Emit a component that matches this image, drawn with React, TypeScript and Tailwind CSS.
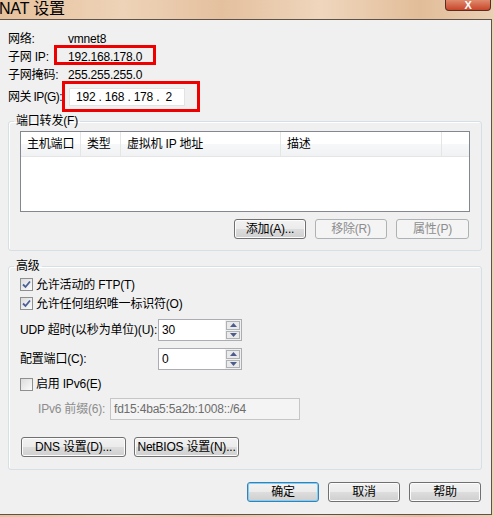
import React from 'react';

const font = { fontFamily: '"Liberation Sans", "Noto Sans CJK SC", sans-serif' };

const Btn: React.FC<{ label: string; w: string; disabled?: boolean; primary?: boolean }> = ({ label, w, disabled, primary }) => {
  const base = 'h-[20px] rounded-[3px] border flex items-center justify-center text-[12px] leading-none shrink-0 whitespace-nowrap';
  const tone = disabled
    ? 'border-[#adb2b5] bg-[#f4f4f4] text-[#8d8d8d]'
    : primary
    ? 'border-[#3c7fb1] bg-[linear-gradient(#f2f2f2_0%,#ebebeb_50%,#dddddd_50%,#cfcfcf_100%)] text-black shadow-[inset_0_0_0_1px_#7ad0f7]'
    : 'border-[#707070] bg-[linear-gradient(#f2f2f2_0%,#ebebeb_50%,#dddddd_50%,#cfcfcf_100%)] text-black shadow-[inset_0_0_0_1px_#fcfcfc]';
  return <div className={`${base} ${tone} ${w}`}>{label}</div>;
};

const Check: React.FC<{ checked?: boolean }> = ({ checked }) => (
  <div className="w-[13px] h-[13px] border border-[#8e8f8f] bg-[linear-gradient(135deg,#dcdcdc,#fbfbfb)] flex items-center justify-center shrink-0">
    {checked && (
      <svg width="9" height="9" viewBox="0 0 9 9">
        <path d="M1 4.5 L3.5 7 L8 1.5" stroke="#4a5f97" strokeWidth="1.8" fill="none" />
      </svg>
    )}
  </div>
);

const Spinner: React.FC<{ value: string }> = ({ value }) => (
  <div className="w-[84px] h-[22px] border border-[#abadb3] bg-white flex">
    <div className="flex-1 pl-[3px] flex items-center text-[12px]">{value}</div>
    <div className="w-[16px] flex flex-col gap-[1px] p-[1px] bg-[#f0f0f0]">
      <div className="flex-1 border border-[#adb2b5] bg-[#eaeaea] flex items-center justify-center">
        <svg width="7" height="4" viewBox="0 0 7 4"><path d="M0 4 L3.5 0 L7 4 Z" fill="#4d5c8c" /></svg>
      </div>
      <div className="flex-1 border border-[#adb2b5] bg-[#eaeaea] flex items-center justify-center">
        <svg width="7" height="4" viewBox="0 0 7 4"><path d="M0 0 L3.5 4 L7 0 Z" fill="#4d5c8c" /></svg>
      </div>
    </div>
  </div>
);

const App: React.FC = () => {
  return (
    <div
      className="w-[494px] h-[517px] flex flex-col overflow-hidden bg-[linear-gradient(90deg,#e6c19c_0%,#eed3b8_25%,#e4c09e_45%,#efd6bd_65%,#e2bd99_85%,#ead0b4_100%)] text-black tracking-[-0.2px]"
      style={font}
    >
      {/* title bar */}
      <div className="h-[19px] flex items-start justify-between shrink-0">
        <span className="text-[16px] leading-[18px] -ml-[1px]">NAT 设置</span>
        <div className="w-[46px] h-[11px] mr-[3px] rounded-b-[4px] border border-t-0 border-[#5a2d22] bg-[linear-gradient(#e08a6d,#c7452a)] flex items-end justify-center">
          <span className="text-[11px] leading-[9px] font-bold text-white">X</span>
        </div>
      </div>

      {/* client area */}
      <div className="flex-1 mr-[2px] mb-[2px] bg-[#f0f0f0] border-t border-r border-b border-[#5f5249] flex flex-col text-[12px]">
        {/* info rows */}
        <div className="pl-[8px] pt-[10px]">
          <div className="h-[18px] flex items-center">
            <span className="w-[60px]">网络:</span>
            <span>vmnet8</span>
          </div>
          <div className="h-[18px] flex items-center">
            <span className="w-[60px]">子网 IP:</span>
            <span className="relative">
              192.168.178.0
              <span className="absolute -left-[14px] -top-[3px] w-[102px] h-[20px] border-[3px] border-[#ee0000]" />
            </span>
          </div>
          <div className="h-[18px] flex items-center">
            <span className="w-[60px]">子网掩码:</span>
            <span>255.255.255.0</span>
          </div>
          <div className="h-[18px] mt-[4px] flex items-center">
            <span className="w-[61px] whitespace-nowrap tracking-[-0.6px]">网关 IP(G):</span>
            <div className="relative w-[116px] h-[18px] border border-[#e3e3e3] bg-white flex items-center pl-[6px] whitespace-pre">
              {'192 . 168 . 178 .  2'}
              <span className="absolute -left-[8px] -top-[8px] w-[138px] h-[31px] border-[3px] border-[#ee0000]" />
            </div>
          </div>
        </div>

        {/* port forwarding group */}
        <fieldset className="mt-[8px] ml-[8px] w-[474px] border border-[#d5dfe5] rounded-[3px] shadow-[inset_1px_1px_0_#ffffff]">
          <legend className="ml-[5px] px-[2px] leading-[14px]">端口转发(F)</legend>
          <div className="ml-[11px] mt-[3px] w-[450px] h-[81px] border border-[#828790] bg-white flex flex-col">
            <div className="h-[25px] flex border-b border-[#e5e5e5] bg-[linear-gradient(#ffffff_0%,#ffffff_50%,#f7f8fa_50%,#f1f2f4_100%)]">
              <div className="w-[60px] pl-[6px] flex items-center border-r border-[#e5e5e5]">主机端口</div>
              <div className="w-[40px] pl-[6px] flex items-center border-r border-[#e5e5e5]">类型</div>
              <div className="w-[160px] pl-[6px] flex items-center border-r border-[#e5e5e5]">虚拟机 IP 地址</div>
              <div className="w-[161px] pl-[6px] flex items-center border-r border-[#e5e5e5]">描述</div>
              <div className="flex-1" />
            </div>
          </div>
          <div className="mt-[7px] mb-[11px] mr-[12px] flex justify-end gap-[9px]">
            <Btn label="添加(A)..." w="w-[72px]" />
            <Btn label="移除(R)" w="w-[72px]" disabled />
            <Btn label="属性(P)" w="w-[73px]" disabled />
          </div>
        </fieldset>

        {/* advanced group */}
        <fieldset className="mt-[8px] ml-[8px] w-[474px] border border-[#d5dfe5] rounded-[3px] shadow-[inset_1px_1px_0_#ffffff]">
          <legend className="ml-[5px] px-[2px] leading-[14px]">高级</legend>
          <div className="pl-[11px] pt-[2px] pb-[12px] flex flex-col">
            <div className="h-[19px] flex items-center gap-[3px]">
              <Check checked />
              <span>允许活动的 FTP(T)</span>
            </div>
            <div className="h-[19px] flex items-center gap-[3px]">
              <Check checked />
              <span>允许任何组织唯一标识符(O)</span>
            </div>
            <div className="mt-[6px] flex items-center">
              <span className="w-[138px] whitespace-nowrap">UDP 超时(以秒为单位)(U):</span>
              <Spinner value="30" />
            </div>
            <div className="mt-[7px] flex items-center">
              <span className="w-[138px]">配置端口(C):</span>
              <Spinner value="0" />
            </div>
            <div className="mt-[5px] h-[18px] flex items-center gap-[3px]">
              <Check />
              <span>启用 IPv6(E)</span>
            </div>
            <div className="mt-[5px] flex items-center pl-[18px]">
              <span className="w-[72px] whitespace-nowrap text-[#8d8d8d]">IPv6 前缀(6):</span>
              <div className="w-[190px] h-[22px] border border-[#c6c6c6] bg-[#f4f4f4] text-[#6d6d6d] pl-[3px] flex items-center">
                fd15:4ba5:5a2b:1008::/64
              </div>
            </div>
            <div className="mt-[17px] flex gap-[8px] pl-[1px]">
              <Btn label="DNS 设置(D)..." w="w-[105px]" />
              <Btn label="NetBIOS 设置(N)..." w="w-[105px]" />
            </div>
          </div>
        </fieldset>

        {/* dialog buttons */}
        <div className="mt-[12px] flex justify-end gap-[9px] pr-[10px]">
          <Btn label="确定" w="w-[72px]" primary />
          <Btn label="取消" w="w-[72px]" />
          <Btn label="帮助" w="w-[72px]" />
        </div>
      </div>
    </div>
  );
};

export default App;
